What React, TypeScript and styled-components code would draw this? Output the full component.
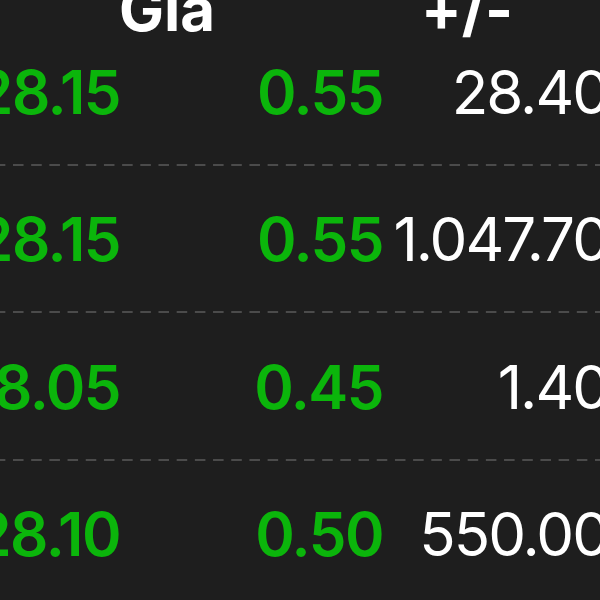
import React from 'react';
import styled, { createGlobalStyle } from 'styled-components';

interface Trade {
  price: string;
  change: string;
  volume: string;
}

const trades: Trade[] = [
  { price: '28.15', change: '0.55', volume: '28.40' },
  { price: '28.15', change: '0.55', volume: '1.047.70' },
  { price: '28.05', change: '0.45', volume: '1.40' },
  { price: '28.10', change: '0.50', volume: '550.00' },
];

const GlobalStyle = createGlobalStyle`
  html, body {
    margin: 0;
    padding: 0;
    background: #1e1e1e;
    overflow: hidden;
  }
  body {
    width: 600px;
    height: 600px;
    font-family: Inter, 'Noto Sans', sans-serif;
  }
`;

const Table = styled.div`
  width: 608px;
  display: flex;
  flex-direction: column;
`;

const HeaderRow = styled.div`
  display: grid;
  grid-template-columns: 119px 302px 1fr;
  height: 18px;
  line-height: 18px;
  font-size: 60px;
  font-weight: 700;
  color: #ffffff;
`;

const HeaderCell = styled.div`
  white-space: nowrap;
`;

const Row = styled.div`
  display: grid;
  grid-template-columns: 120px 263px 1fr;
  align-items: center;
  height: 143.5px;
  padding: 2px 0;
  background-image: linear-gradient(to right, #4b4b4b 11px, transparent 11px);
  background-size: 18.2px 2px;
  background-repeat: repeat-x;
  background-position: 13px 100%;
  font-size: 60px;
`;

const Cell = styled.div<{ $tone: 'up' | 'plain' }>`
  justify-self: end;
  white-space: nowrap;
  font-weight: ${p => (p.$tone === 'up' ? 600 : 400)};
  color: ${p => (p.$tone === 'up' ? '#0bb50b' : '#ffffff')};
  letter-spacing: ${p => (p.$tone === 'up' ? '-1.5px' : '-2px')};
`;

export default function App() {
  return (
    <>
      <GlobalStyle />
      <Table>
        <HeaderRow>
          <HeaderCell />
          <HeaderCell>Giá</HeaderCell>
          <HeaderCell>+/-</HeaderCell>
        </HeaderRow>
        {trades.map((t, i) => (
          <Row key={i}>
            <Cell $tone="up">{t.price}</Cell>
            <Cell $tone="up">{t.change}</Cell>
            <Cell $tone="plain">{t.volume}</Cell>
          </Row>
        ))}
      </Table>
    </>
  );
}
